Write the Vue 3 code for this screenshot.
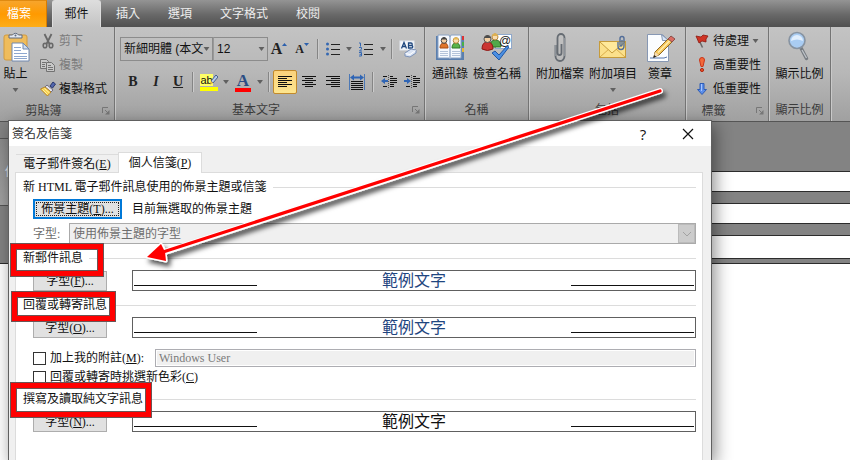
<script setup>
import { ref } from 'vue'

const fontName = ref('新細明體 (本文)')
const fontSize = ref('12')
const noteChecked = ref(false)
const colorChecked = ref(false)
const tabs = ['插入', '選項', '文字格式', '校閱']
const fields = [1, 2, 3]
</script>

<template>
  <div class="page">
    <header>
      <nav class="tabs">
        <button class="tab file">檔案</button>
        <button class="tab active">郵件</button>
        <button v-for="t in tabs" :key="t" class="tab">{{ t }}</button>
      </nav>

      <div class="ribbon">
        <section class="group clipboard">
          <div class="tools">
            <button class="big">
              <svg class="pic" width="32" height="32" viewBox="0 0 32 32">
                <rect x="4" y="4" width="23" height="25" rx="2" fill="#efbc5c" stroke="#d39a3d" />
                <path d="M9 7V4h3.500a3.500 3.500 0 0 1 6 0H22v3z" fill="#e4e9f0" stroke="#5f6b80" />
                <circle cx="15.500" cy="4.500" r="1" fill="#5f6b80" />
                <path d="M12 12h11l6 6v12H12z" fill="#fff" stroke="#7088ae" />
                <path d="M23 12v6h6z" fill="#cdddf3" stroke="#7088ae" />
                <path d="M14 16.500h7M14 19.500h7M14 22.500h13M14 25.500h13M14 27.500h13" stroke="#8da7cf" />
              </svg>
              <span>貼上</span>
              <i class="caret"></i>
            </button>
            <div class="stack">
              <button class="line off">
                <svg width="16" height="16" viewBox="0 0 16 16" fill="none" stroke="#686868">
                  <path d="M4.500 1l5 10M11.500 1l-5 10" stroke-width="1.800" />
                  <ellipse cx="5" cy="12.500" rx="1.800" ry="2.300" stroke-width="1.600" /><ellipse cx="11" cy="12.500" rx="1.800" ry="2.300" stroke-width="1.600" />
                </svg>剪下
              </button>
              <button class="line off">
                <svg width="16" height="16" viewBox="0 0 16 16" fill="#c8c8c8" stroke="#727272">
                  <path d="M.5 2.500h6l2 2v7h-8z" /><path d="M2 5.500h4M2 7.500h3M2 9.500h3" />
                  <path d="M6.500 5.500h5l3 3v6h-8z" /><path d="M8 8.500h3M8 10.500h5M8 12.500h5" />
                </svg>複製
              </button>
              <button class="line">
                <svg width="16" height="16" viewBox="0 0 16 16">
                  <path d="M10 5l3-4 2.500 2-3 4z" fill="#5266ad" stroke="#29376d" />
                  <path d="M7 4l6 5-2 2-6-5z" fill="#e4e4ee" stroke="#6e6e85" />
                  <path d="M5 6L.5 8l7 7L11 11z" fill="#fbd34f" stroke="#b98728" />
                  <path d="M2.500 8.500l5 5M4.500 7.500l5 4.500" stroke="#fff2a6" />
                </svg>複製格式
              </button>
            </div>
          </div>
          <footer><span>剪貼簿</span><svg class="launch" width="8" height="8" viewBox="0 0 8 8"><path d="M.5 6V.5H6M3 3l3 3" fill="none" stroke="#777" /><path d="M7.500 3v4.500H3z" fill="#777" /></svg></footer>
        </section>

        <section class="group text">
          <div class="rows">
            <div class="row">
              <label class="combo name"><select v-model="fontName" aria-label="字型"><option>新細明體 (本文)</option></select><i class="caret"></i></label>
              <label class="combo size"><select v-model="fontSize" aria-label="大小"><option>12</option></select><i class="caret"></i></label>
              <button class="t w22" aria-label="放大字型"><span class="serif grow">A</span><svg width="5" height="14" viewBox="0 0 5 14"><path d="M0 4l2.500-3L5 4z" fill="#2b60ad" /></svg></button>
              <button class="t w24" aria-label="縮小字型"><span class="serif shrink">A</span><svg width="5" height="14" viewBox="0 0 5 14"><path d="M0 1l2.500 3L5 1z" fill="#2b60ad" /></svg></button>
              <i class="sep"></i>
              <button class="t w22" aria-label="項目符號">
                <svg width="14" height="14" viewBox="0 0 14 14"><path d="M5 2.500h9M5 7.500h9M5 12.500h9" stroke="#222" /><g fill="#3568b2"><circle cx="1.500" cy="2" r="1.500" /><circle cx="1.500" cy="7" r="1.500" /><circle cx="1.500" cy="12" r="1.500" /></g></svg>
              </button>
              <button class="t drop" aria-label="項目符號選單"><i class="caret"></i></button>
              <button class="t w24" aria-label="編號">
                <svg width="14" height="15" viewBox="0 0 14 15"><path d="M5 2.500h9M5 7.500h9M5 12.500h9" stroke="#222" /><path d="M0 1h1.500v3.500M0 5.500h2.500v1.500L.5 9H3M0 10.500h2.500v3.500H0M.5 12.300h2" fill="none" stroke="#3568b2" /></svg>
              </button>
              <button class="t drop" aria-label="編號選單"><i class="caret"></i></button>
              <i class="sep"></i>
              <button class="t w24" aria-label="清除格式">
                <svg width="18" height="18" viewBox="0 0 18 18"><rect x="1" y="1" width="14" height="9" fill="#f7f9fc" stroke="#e3e8ef" /><path d="M2.500 8.500L5 2.500l2.500 6M3.500 6.500h3M9.500 3v5h3a1 1 0 0 0 0-2.500h-3 2.500a1 1 0 0 0 0-2.500z" fill="none" stroke="#1f477e" stroke-width="1.300" /><path d="M6 13l6-4 5 1v3l-6 4-5-1z" fill="#d9e3f4" stroke="#7c92b8" /><path d="M6.500 13.500l4.500 1 5.500-4" fill="none" stroke="#fff" /></svg>
              </button>
            </div>
            <div class="row second">
              <button class="t w24 serif fmt"><b>B</b></button>
              <button class="t w22 serif fmt"><b><i>I</i></b></button>
              <button class="t w22 serif fmt"><b><u>U</u></b></button>
              <i class="sep"></i>
              <button class="t w24" aria-label="文字醒目提示">
                <span class="mark"><span class="ab">ab</span><svg width="9" height="12" viewBox="0 0 9 12"><path d="M2 7l5-6 2 2-5 6z" fill="#b9cbea" stroke="#44608f" /><path d="M2 7l2 2-3 2z" fill="#e9bc3e" /></svg></span>
              </button>
              <button class="t drop" aria-label="醒目提示色彩"><i class="caret"></i></button>
              <button class="t w24 serif fontcolor"><b>A</b></button>
              <button class="t drop" aria-label="字型色彩"><i class="caret"></i></button>
              <i class="sep"></i>
              <button class="t w24 on" aria-label="靠左對齊"><svg width="14" height="14" viewBox="0 0 14 14" stroke="#111"><path d="M0 1.500h14M0 3.500h9M0 5.500h14M0 7.500h9M0 9.500h14M0 11.500h9" /></svg></button>
              <button class="t w24" aria-label="置中"><svg width="14" height="14" viewBox="0 0 14 14" stroke="#111"><path d="M0 1.500h14M3 3.500h8M0 5.500h14M3 7.500h8M0 9.500h14M3 11.500h8" /></svg></button>
              <button class="t w24" aria-label="靠右對齊"><svg width="14" height="14" viewBox="0 0 14 14" stroke="#111"><path d="M0 1.500h14M5 3.500h9M0 5.500h14M5 7.500h9M0 9.500h14M5 11.500h9" /></svg></button>
              <button class="t w24" aria-label="分散對齊"><svg width="16" height="17" viewBox="0 0 16 17"><path d="M.5 0v16M15.500 0v16" stroke="#4c78b5" /><path d="M1 3.500l4-3v2h6v-2l4 3-4 3v-2H5v2z" fill="#2f65b5" /><path d="M2 7.500h12M2 9.500h12M2 11.500h12M2 13.500h12M2 15.500h12" stroke="#111" /></svg></button>
              <i class="sep"></i>
              <button class="t w24" aria-label="減少縮排"><svg width="16" height="14" viewBox="0 0 16 14"><path d="M7.500 0v14" stroke="#555" stroke-dasharray="1 1" /><path d="M2 1.500h4M9 1.500h3M9 3.500h7M9 5.500h7M9 7.500h7M9 9.500h4M2 11.500h4M9 11.500h4" stroke="#111" /><path d="M0 6l4-3v2h3v2H4v2z" fill="#2f65b5" /></svg></button>
              <button class="t w22" aria-label="增加縮排"><svg width="16" height="14" viewBox="0 0 16 14"><path d="M7.500 0v14" stroke="#555" stroke-dasharray="1 1" /><path d="M2 1.500h4M9 1.500h3M9 3.500h7M9 5.500h7M9 7.500h7M9 9.500h4M2 11.500h4M9 11.500h4" stroke="#111" /><path d="M7 6L3 3v2H0v2h3v2z" fill="#2f65b5" /></svg></button>
            </div>
          </div>
          <footer><span>基本文字</span><svg class="launch" width="8" height="8" viewBox="0 0 8 8"><path d="M.5 6V.5H6M3 3l3 3" fill="none" stroke="#777" /><path d="M7.500 3v4.500H3z" fill="#777" /></svg></footer>
        </section>

        <section class="group names">
          <div class="tools">
            <button class="big">
              <svg class="pic" width="32" height="32" viewBox="0 0 32 32">
                <path d="M2 5h28v24H2z" fill="#5b7fae" /><path d="M4 4h11l1 2 1-2h10v23H17l-1 1-1-1H4z" fill="#f6f9fd" stroke="#8aa2c3" />
                <path d="M16 6v21" stroke="#7691b8" /><path d="M28 5h2v4h-2z" fill="#d33" /><path d="M28 11h2v4h-2z" fill="#46b04b" /><path d="M28 17h2v4h-2z" fill="#e8b732" />
                <path d="M6 17q0-5 4-5t4 5z" fill="#e0762a" stroke="#a94c12" /><circle cx="10" cy="9.500" r="2.800" fill="#f4cfa2" stroke="#444" /><path d="M7 8.500q3-5 6 0z" fill="#444" />
                <path d="M18 17q0-5 4-5t4 5z" fill="#5ab34a" stroke="#2f7a25" /><circle cx="22" cy="9.500" r="2.800" fill="#f8dcae" stroke="#b8873a" /><path d="M19 8.500q3-5 6 0z" fill="#e6b954" />
                <path d="M6 20.500h8M6 22.500h8M6 24.500h8M18 20.500h8M18 22.500h8M18 24.500h8" stroke="#b4c3d9" />
              </svg>
              <span>通訊錄</span>
            </button>
            <button class="big">
              <svg class="pic" width="32" height="32" viewBox="0 0 32 32">
                <rect x="14.500" y="3.500" width="16" height="14" fill="#fff" stroke="#8fa8cb" />
                <path d="M9 16q0-7 5.500-7t5.500 7z" fill="#51a84a" stroke="#2b7425" /><circle cx="14" cy="6" r="3" fill="#f8dcae" stroke="#b8873a" /><path d="M10.500 5q3.500-6 7 0z" fill="#ddb052" />
                <path d="M1 18q0-7 5.500-7t5.500 7q-5.500 3-11 0z" fill="#cb3532" stroke="#8d1713" /><circle cx="6.500" cy="8" r="3.500" fill="#f4cfa2" stroke="#555" /><path d="M3 7q3.500-6 7 0z" fill="#4c4c4c" />
                <text x="18" y="14" font-size="12" font-family="Liberation Sans, sans-serif" fill="#222">@</text>
                <path d="M11 22l3-2 4 4 8-9 2 1-10 13z" fill="#4b8fe2" stroke="#2057a5" />
              </svg>
              <span>檢查名稱</span>
            </button>
          </div>
          <footer><span>名稱</span></footer>
        </section>

        <section class="group include">
          <div class="tools">
            <button class="big">
              <svg class="pic" width="32" height="32" viewBox="0 0 32 32" fill="none"><path d="M11.500 14v11a4.500 5 0 0 0 9 0V7a3.500 4 0 0 0-7 0v15a2 2 0 0 0 4 0V13" stroke="#666c73" stroke-width="1.800" /><path d="M11.500 14v11M20.500 7v18" stroke="#969ca3" stroke-width=".8" /></svg>
              <span>附加檔案</span>
            </button>
            <button class="big">
              <svg class="pic" width="32" height="32" viewBox="0 0 32 32" fill="none"><rect x="2.500" y="10.500" width="26" height="16" fill="#fbe08b" stroke="#c69b3b" /><path d="M3 26l9-8M28 26l-9-8" stroke="#d9ad4b" /><path d="M3 11l12 11 13-11" fill="#ffe99b" stroke="#c69b3b" /><path d="M21 11v4a3 3.500 0 0 0 6 0V7.500a2 2 0 0 0-4 0V14a1 1 0 0 0 2 0V9" stroke="#526d98" stroke-width="1.400" /></svg>
              <span>附加項目</span>
              <i class="caret"></i>
            </button>
            <button class="big sign">
              <svg class="pic" width="32" height="32" viewBox="0 0 32 32"><path d="M3.500 3.500h15l6 6v21h-21z" fill="#fbfdff" stroke="#8798b4" /><path d="M17.500 3.500l1 6h6z" fill="#d8e5f6" stroke="#8798b4" /><path d="M6 27h14l3-1" fill="none" stroke="#5676ac" /><path d="M11 21L25 7l4 3-14 14-5 2z" fill="#f6c659" stroke="#8f6821" /><path d="M14 21.500L26.500 9" stroke="#fff0b0" stroke-width="1.500" /><path d="M24 8l3-3 4 3-3 3z" fill="#d96b62" stroke="#8c4f4a" /><path d="M11 21l-1 5 5-2z" fill="#f5ddb5" /><path d="M9 27l1.200-3 2 1.800z" fill="#222" /></svg>
              <span>簽章</span>
            </button>
          </div>
          <footer><span>包括</span></footer>
        </section>

        <section class="group tags">
          <div class="stack">
            <button class="line"><svg width="16" height="16" viewBox="0 0 16 16"><path d="M3.500 4l5 10.500" stroke="#666" stroke-width="1.500" /><path d="M2 3l5 1 2-2 5 1-2 3 0 3-4-1-3 2z" fill="#cf3425" stroke="#8b180f" stroke-width=".8" /></svg>待處理<i class="caret"></i></button>
            <button class="line"><svg width="16" height="16" viewBox="0 0 16 16"><path d="M5.500 3q0-2.500 2.500-2.500t2.500 2.500L9 9.500H7z" fill="#f2683a" stroke="#cb3518" /><circle cx="8" cy="13" r="1.600" fill="#e84b22" stroke="#b12812" /></svg>高重要性</button>
            <button class="line"><svg width="16" height="16" viewBox="0 0 16 16"><path d="M6 2.500h4v6h2.500L8 13.500 3.500 8.500H6z" fill="#5b8eea" stroke="#2f5db5" /><path d="M7.500 3v7" stroke="#a7c5ff" /></svg>低重要性</button>
          </div>
          <footer><span>標籤</span><svg class="launch" width="8" height="8" viewBox="0 0 8 8"><path d="M.5 6V.5H6M3 3l3 3" fill="none" stroke="#777" /><path d="M7.500 3v4.500H3z" fill="#777" /></svg></footer>
        </section>

        <section class="group zoom">
          <div class="tools">
            <button class="big">
              <svg class="pic" width="32" height="32" viewBox="0 0 32 32"><path d="M18 17l5.500 10.500" stroke="#777c82" stroke-width="3.500" stroke-linecap="round" /><path d="M19 19l4.500 8" stroke="#c0c5ca" stroke-width="1.300" /><circle cx="14" cy="9.500" r="8" fill="#a9ccf2" stroke="#8793a1" stroke-width="1.600" /><path d="M8 10a6 6 0 0 1 12 0q-6-3-12 0z" fill="#e0eefd" /></svg>
              <span>顯示比例</span>
            </button>
          </div>
          <footer><span>顯示比例</span></footer>
        </section>
      </div>
    </header>

    <main class="mail">
      <div class="envelope">
        <button class="send">傳送</button>
        <div class="fields"><input v-for="f in fields" :key="f" type="text" :aria-label="'欄位 ' + f" :class="{ last: f === 3 }" /></div>
      </div>
    </main>

    <div class="dialog" role="dialog" aria-labelledby="dlg-title">
      <div class="titlebar">
        <span id="dlg-title">簽名及信箋</span>
        <button class="help" aria-label="說明">?</button>
        <button class="close" aria-label="關閉"><svg width="12" height="12" viewBox="0 0 12 12"><path d="M1 1l10 10M11 1L1 11" stroke="#111" stroke-width="1.200" /></svg></button>
      </div>
      <div class="dlg-tabs">
        <button class="dtab">電子郵件簽名(<u>E</u>)</button>
        <button class="dtab current">個人信箋(<u>P</u>)</button>
      </div>
      <div class="panel">
        <h2>新 HTML 電子郵件訊息使用的佈景主題或信箋</h2>
        <div class="setting theme">
          <button class="push focused"><span>佈景主題(<u>T</u>)...</span></button>
          <span>目前無選取的佈景主題</span>
        </div>
        <div class="setting fontrow">
          <label for="theme-font">字型:</label>
          <div class="wide-select">
            <select id="theme-font" disabled><option>使用佈景主題的字型</option></select>
            <i><svg width="10" height="6" viewBox="0 0 10 6"><path d="M1 1l4 4 4-4" fill="none" stroke="#a2a2a2" /></svg></i>
          </div>
        </div>
        <h2 class="next">新郵件訊息</h2>
        <div class="setting">
          <button class="push">字型(<u>F</u>)...</button>
          <div class="preview blue"><span>範例文字</span></div>
        </div>
        <h2 class="next">回覆或轉寄訊息</h2>
        <div class="setting">
          <button class="push">字型(<u>O</u>)...</button>
          <div class="preview blue"><span>範例文字</span></div>
        </div>
        <div class="check note">
          <input id="note" v-model="noteChecked" type="checkbox" />
          <label for="note">加上我的附註(<u>M</u>):</label>
          <input type="text" value="Windows User" disabled aria-label="附註" />
        </div>
        <div class="check">
          <input id="color" v-model="colorChecked" type="checkbox" />
          <label for="color">回覆或轉寄時挑選新色彩(<u>C</u>)</label>
        </div>
        <h2>撰寫及讀取純文字訊息</h2>
        <div class="setting">
          <button class="push">字型(<u>N</u>)...</button>
          <div class="preview"><span>範例文字</span></div>
        </div>
      </div>
    </div>

    <svg class="callouts" width="700" height="460" viewBox="0 0 700 460" fill="none">
      <defs><filter id="soft" x="-10%" y="-10%" width="120%" height="130%"><feDropShadow dx="3" dy="4" stdDeviation="2.500" flood-opacity=".7" /></filter></defs>
      <g v-for="(r, i) in [[10, 243, 94, 34], [11, 291, 105, 31], [10, 382, 142, 36]]" :key="i">
        <rect :x="r[0] + 3.5" :y="r[1] + 3.5" :width="r[2] - 7" :height="r[3] - 7" stroke="#6b5555" stroke-width="7" />
        <rect :x="r[0] + 3.5" :y="r[1] + 3.5" :width="r[2] - 7" :height="r[3] - 7" stroke="#f00" stroke-width="5" />
      </g>
      <g filter="url(#soft)">
        <path d="M660 91L165 252" stroke="#fff" stroke-width="6" stroke-linecap="round" />
        <path d="M147 257l14-13 4 7 1 10z" fill="#f00" stroke="#fff" stroke-width="3" stroke-linejoin="round" />
      </g>
      <path d="M660 91L163 252" stroke="#f00" stroke-width="3.200" stroke-linecap="round" />
      <path d="M147 257l14-13 4 8 1 9z" fill="#f00" />
    </svg>
  </div>
</template>

<style>
body { margin: 0; }
</style>

<style scoped>
.page { position: relative; min-height: 100vh; overflow: hidden; display: flex; flex-direction: column; background: #fff; color: #111; font: 12px/16px "Liberation Sans", "Noto Sans CJK TC", sans-serif; }
.page * { box-sizing: border-box; }
button, input, select { font: inherit; color: inherit; margin: 0; padding: 0; border: 0; background: none; border-radius: 0; appearance: none; white-space: nowrap; }
svg { display: block; flex: none; }
.tabs { display: flex; height: 27px; background: linear-gradient(#949494, #686868 55%, #505050); }
.tab { padding: 0 14px; color: #eee; }
.tab.file { width: 47px; margin-right: 5px; padding: 0 8px 0 0; color: #fff; background: linear-gradient(#f7a52c, #ff9a00 50%, #fdad19); border-right: 1px solid #d97d00; border-top: 1px solid #e08a10; }
.tab.active { width: 49px; padding: 0; margin-right: 1px; color: #111; background: linear-gradient(#ddd, #c3c3c3); border: 1px solid #ddd; border-bottom: 0; border-radius: 3px 3px 0 0; }
.ribbon { display: flex; height: 95px; background: linear-gradient(#c3c3c3, #b7b7b7 50%, #a0a0a0); border-bottom: 1px solid #555; }
.group { display: flex; flex-direction: column; justify-content: space-between; flex: none; border-right: 1px solid #747474; box-shadow: 1px 0 #c9c9c9; }
.clipboard { width: 115px; } .text { width: 310px; } .names { width: 104px; } .include { width: 157px; } .tags { width: 83px; } .zoom { width: 62px; }
.group footer { display: flex; align-items: center; height: 22px; color: #3c3c3c; }
.group footer span { flex: 1; text-align: center; }
.launch { margin: 0 4px 0 15px; }
.tools { display: flex; padding-top: 4px; }
.big { display: flex; flex-direction: column; align-items: center; height: 64px; }
.big span { line-height: 22px; }
.big .caret { margin-top: 3px; }
.caret { flex: none; width: 7px; height: 4px; background: #606060; clip-path: polygon(8% 0, 92% 0, 50% 100%); }
.clipboard .big { width: 31px; }
.clipboard .tools { gap: 9px; }
.stack { display: flex; flex-direction: column; }
.line { display: flex; align-items: center; gap: 3px; height: 24px; }
.clipboard .stack { margin-top: -2px; }
.off { color: #7c7c7c; }
.names .tools { padding-left: 7px; gap: 5px; }
.include .tools { padding-left: 7px; gap: 5px; }
.include .sign { width: 36px; }
.tags .stack { padding: 2px 0 0 8px; }
.zoom .tools { justify-content: center; }
.rows { padding: 10px 0 0 5px; display: flex; flex-direction: column; gap: 9px; }
.row { display: flex; align-items: center; height: 24px; }
.row.second { padding-left: 1px; }
.combo { display: flex; align-items: center; height: 24px; border: 1px solid #8c8c8c; padding: 0 2px 0 3px; }
.combo select { flex: 1; min-width: 0; height: 22px; overflow: hidden; }
.combo.name { width: 93px; }
.combo.size { width: 55px; border-left-color: #999; }
.t { display: flex; align-items: center; justify-content: center; height: 24px; flex: none; }
.w22 { width: 22px; } .w24 { width: 24px; } .drop { width: 10px; }
.sep { width: 8px; height: 20px; flex: none; background: linear-gradient(90deg, transparent 3px, #858585 3px, #858585 4px, #ccc 4px, #ccc 5px, transparent 5px); }
.serif { font-family: "Liberation Serif", serif; font-weight: bold; color: #222; }
.grow { font-size: 16px; } .shrink { font-size: 12px; }
.fmt { font-size: 14px; }
.on { border: 1px solid #c28a2c; border-radius: 2px; background: linear-gradient(#fbd27c, #fde58e); }
.mark { display: flex; align-items: flex-start; height: 17px; border-bottom: 4px solid #ff0; }
.mark .ab { line-height: 12px; background: #ff6; font-size: 11px; }
.mark svg { margin-left: -4px; }
.fontcolor { font-size: 17px; }
.fontcolor b { width: 16px; height: 19px; line-height: 16px; border-bottom: 4px solid #f00; color: #2b4d84; }
.mail { flex: 1; background: #fff; }
.envelope { display: flex; align-items: flex-start; background: #838383; height: 142px; border-bottom: 1px solid #2c2c2c; }
.send { width: 90px; height: 68px; margin-top: 16px; padding-left: 5px; text-align: left; color: #dce2ed; background: linear-gradient(#8b8b8b, #a2a2a2); border: 1px solid #555; border-left: 0; }
.fields { flex: 1; display: flex; flex-direction: column; gap: 11px; padding-top: 49px; }
.fields input { width: 100%; height: 21px; background: #fff; border: solid #2c2c2c; border-width: 1px 0; }
.fields input.last { height: 24px; }
.dialog { position: absolute; left: 8px; right: 138px; top: 120px; bottom: 0; display: flex; flex-direction: column; background: #f0f0f0; border: 1px solid #606060; border-bottom: 0; box-shadow: 3px 5px 16px rgba(0, 0, 0, .45); font-family: "Liberation Serif", "Noto Sans CJK TC", serif; }
.titlebar { display: flex; align-items: center; height: 25px; padding-left: 3px; background: #fff; color: #333; }
.titlebar span { flex: 1; }
.help { width: 24px; font: 15px/24px "Open Sans", sans-serif; color: #111; }
.close { display: flex; justify-content: center; width: 24px; margin: 0 11px 0 21px; }
.dlg-tabs { display: flex; align-items: flex-end; height: 26px; padding: 6px 0 0 7px; }
.dtab { height: 18px; width: 102px; border-top: 1px solid #dcdcdc; }
.dtab.current { position: relative; z-index: 1; width: 84px; height: 21px; margin-bottom: -1px; padding-bottom: 1px; background: #fff; border: 1px solid #dcdcdc; border-bottom: 0; }
.panel { flex: 1; margin: 0 8px 0 6px; padding: 2px 6px 0 7px; background: #fff; border: 1px solid #dcdcdc; border-bottom: 0; }
h2 { display: flex; align-items: center; gap: 6px; height: 24px; margin: 0; font: inherit; }
h2::after { content: ""; flex: 1; height: 1px; background: #dcdcdc; }
.next { margin-top: 2px; }
.setting { display: flex; align-items: center; height: 21px; padding-left: 10px; gap: 25px; }
.push { width: 74px; height: 20px; line-height: 18px; background: #e1e1e1; border: 1px solid #adadad; }
.theme { gap: 10px; height: 20px; margin-bottom: 4px; }
.focused { width: 89px; border: 2px solid #0078d7; padding: 1px; }
.focused span { display: block; line-height: 12px; border: 1px dotted #222; }
.fontrow { gap: 0; color: #6d6d6d; }
.fontrow label { width: 36px; }
.wide-select { flex: 1; display: flex; height: 21px; background: #f0f0f0; border: 1px solid #aaa; }
.wide-select select { flex: 1; padding-left: 3px; opacity: 1; }
.wide-select i { display: flex; align-items: center; justify-content: center; width: 17px; background: #ccc; border: 1px solid #bbb; }
.preview { flex: 1; display: flex; justify-content: space-between; align-items: flex-end; height: 21px; padding: 0 1px; border: 1px solid #606060; font-size: 16px; line-height: 19px; }
.preview::before, .preview::after { content: ""; width: 22%; height: 1px; margin-bottom: 4px; background: #111; }
.blue span { color: #1f4680; }
.check { display: flex; align-items: center; height: 20px; padding-left: 10px; }
.check.note { height: 18px; margin-top: 11px; }
.check input[type="checkbox"] { width: 13px; height: 13px; border: 1px solid #333; margin-right: 4px; }
.check.note label { width: 105px; }
.check input[type="text"] { flex: 1; height: 18px; padding: 0 3px; color: #7a7a7a; background: #f0f0f0; border: 1px solid #adadb2; box-shadow: inset 0 0 0 1px #fff; }
.callouts { position: absolute; left: 0; top: 0; pointer-events: none; }
</style>
